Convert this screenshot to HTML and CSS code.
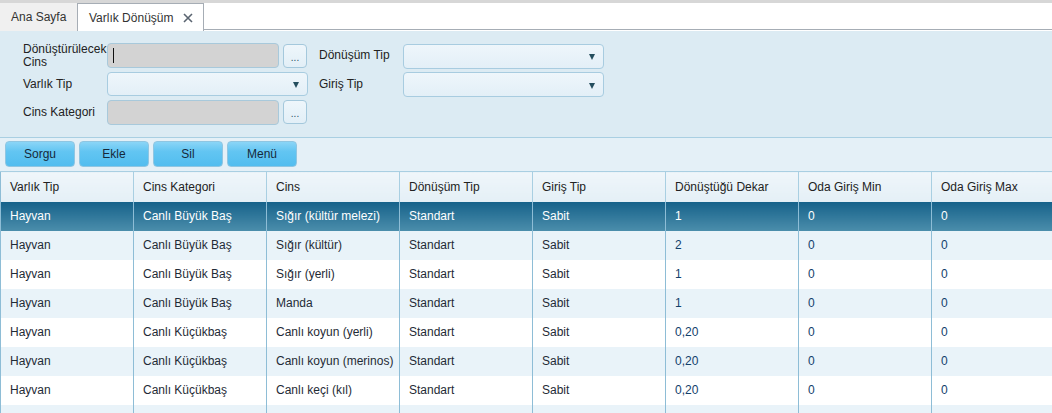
FILE: index.html
```html
<!DOCTYPE html>
<html lang="tr">
<head>
<meta charset="utf-8">
<title>Varlık Dönüşüm</title>
<link rel="stylesheet" href="styles.css">
</head>
<body>
<div class="topstrip"></div>
<div class="tabbar">
  <div class="tab">Ana Sayfa</div>
  <div class="tab active">Varlık Dönüşüm
    <svg class="close" width="10" height="10" viewBox="0 0 10 10"><path d="M1 1L9 9M9 1L1 9" stroke="#5a6470" stroke-width="1.6" fill="none"/></svg>
  </div>
  <div class="tabfill"></div>
</div>

<div class="form">
  <div class="lbl two">Dönüştürülecek Cins</div>
  <div class="inp gray"><span class="caret"></span></div>
  <div class="dots">...</div>
  <div class="lbl r">Dönüşüm Tip</div>
  <div class="sel r"><span class="arrow"></span></div>

  <div class="lbl">Varlık Tip</div>
  <div class="sel wide"><span class="arrow"></span></div>
  <div class="lbl r">Giriş Tip</div>
  <div class="sel r"><span class="arrow"></span></div>

  <div class="lbl">Cins Kategori</div>
  <div class="inp gray"></div>
  <div class="dots">...</div>
</div>

<div class="toolbar">
  <button class="btn">Sorgu</button>
  <button class="btn">Ekle</button>
  <button class="btn">Sil</button>
  <button class="btn">Menü</button>
</div>

<div class="grid">
<table>
  <thead>
    <tr><th>Varlık Tip</th><th>Cins Kategori</th><th>Cins</th><th>Dönüşüm Tip</th><th>Giriş Tip</th><th>Dönüştüğü Dekar</th><th>Oda Giriş Min</th><th>Oda Giriş Max</th></tr>
  </thead>
  <tbody>
    <tr class="selected"><td>Hayvan</td><td>Canlı Büyük Baş</td><td>Sığır (kültür melezi)</td><td>Standart</td><td>Sabit</td><td class="num">1</td><td class="num">0</td><td class="num">0</td></tr>
    <tr class="alt"><td>Hayvan</td><td>Canlı Büyük Baş</td><td>Sığır (kültür)</td><td>Standart</td><td>Sabit</td><td class="num">2</td><td class="num">0</td><td class="num">0</td></tr>
    <tr><td>Hayvan</td><td>Canlı Büyük Baş</td><td>Sığır (yerli)</td><td>Standart</td><td>Sabit</td><td class="num">1</td><td class="num">0</td><td class="num">0</td></tr>
    <tr class="alt"><td>Hayvan</td><td>Canlı Büyük Baş</td><td>Manda</td><td>Standart</td><td>Sabit</td><td class="num">1</td><td class="num">0</td><td class="num">0</td></tr>
    <tr><td>Hayvan</td><td>Canlı Küçükbaş</td><td>Canlı koyun (yerli)</td><td>Standart</td><td>Sabit</td><td class="num">0,20</td><td class="num">0</td><td class="num">0</td></tr>
    <tr class="alt"><td>Hayvan</td><td>Canlı Küçükbaş</td><td>Canlı koyun (merinos)</td><td>Standart</td><td>Sabit</td><td class="num">0,20</td><td class="num">0</td><td class="num">0</td></tr>
    <tr><td>Hayvan</td><td>Canlı Küçükbaş</td><td>Canlı keçi (kıl)</td><td>Standart</td><td>Sabit</td><td class="num">0,20</td><td class="num">0</td><td class="num">0</td></tr>
    <tr class="alt"><td>Hayvan</td><td>Canlı Küçükbaş</td><td>Canlı keçi (kültür)</td><td>Standart</td><td>Sabit</td><td class="num">0,20</td><td class="num">0</td><td class="num">0</td></tr>
  </tbody>
</table>
</div>
</body>
</html>
```

FILE: styles.css
```css
html, body {
  margin: 0;
  padding: 0;
  width: 1052px;
  height: 413px;
  overflow: hidden;
  background: #ffffff;
  font-family: "Liberation Sans", Arial, sans-serif;
  font-size: 12px;
  color: #222;
}

.topstrip {
  height: 3px;
  background: #d7d7d7;
}

.tabbar {
  display: flex;
  height: 28px;
}

.tab {
  display: flex;
  align-items: center;
  box-sizing: border-box;
  padding: 0 0 0 11px;
  background: #f0f0f0;
  color: #333;
  width: 77px;
  white-space: nowrap;
  flex: none;
}

.tab.active {
  background: #fff;
  padding: 0 0 0 11px;
  border-top: 1px solid #a6adb5;
  border-left: 1px solid #a6adb5;
  border-right: 1px solid #a6adb5;
  width: 127px;
  color: #333;
}

.close {
  margin-left: 10px;
}

.tabfill {
  flex: 1;
  background: #fff;
  border-bottom: 1px solid #a6adb5;
  margin-bottom: 1px;
}

.form {
  background: #dcebf3;
  border-bottom: 1px solid #a9cfe2;
  height: 94px;
  padding: 12px 0 0 23px;
  display: grid;
  grid-template-columns: 84px 172px 28px 12px 84px 201px;
  grid-template-rows: 25px 24px 24px;
  column-gap: 0;
  row-gap: 4px;
  align-items: center;
}

.lbl {
  color: #222;
  line-height: 13px;
  white-space: nowrap;
}

.lbl.two {
  width: 86px;
  white-space: normal;
  position: relative;
  z-index: 1;
}

.lbl.r {
  grid-column: 5;
}

.sel.r {
  grid-column: 6;
  height: 25px;
  margin-top: 1px;
}

.inp {
  height: 25px;
  box-sizing: border-box;
  border: 1px solid #a8c9db;
  border-radius: 4px;
  display: flex;
  align-items: center;
}

.inp.gray {
  background: #d3d3d3;
}

.caret {
  display: block;
  width: 1px;
  height: 15px;
  background: #111;
  margin-left: 5px;
}

.dots {
  grid-column: 3;
  margin-left: 4px;
  width: 24px;
  height: 24px;
  box-sizing: border-box;
  border: 1px solid #a4c8dc;
  border-radius: 4px;
  background: linear-gradient(#eef6fb, #e2eff7);
  color: #2d4f63;
  font-size: 10px;
  text-align: center;
  line-height: 26px;
}

.sel {
  height: 24px;
  box-sizing: border-box;
  border: 1px solid #a8cce0;
  border-radius: 4px;
  background: linear-gradient(#eef6fb, #e3eff7);
  display: flex;
  align-items: center;
  justify-content: flex-end;
  padding-right: 8px;
}

.sel.wide {
  grid-column: 2 / span 2;
  margin-right: -1px;
}

.arrow {
  width: 0;
  height: 0;
  border-left: 3.5px solid transparent;
  border-right: 3.5px solid transparent;
  border-top: 6px solid #244e5e;
  margin-top: 2px;
}

.toolbar {
  background: #e4f0f7;
  height: 33px;
  box-sizing: border-box;
  padding: 3px 0 0 5px;
  display: flex;
  gap: 4px;
  align-items: flex-start;
}

.btn {
  width: 70px;
  height: 26px;
  border: 1px solid #8fc6e2;
  border-radius: 4px;
  background: linear-gradient(#8bd5f7 0%, #62c5f2 40%, #52bdef 100%);
  font-family: "Liberation Sans", Arial, sans-serif;
  font-size: 12px;
  color: #16293a;
  padding: 0;
}

.grid {
  width: 1052px;
  overflow: hidden;
}

table {
  border-collapse: collapse;
  table-layout: fixed;
  width: 1065px;
  border-left: 1px solid #8ebdd6;
}

th, td {
  width: 133px;
  box-sizing: border-box;
  text-align: left;
  font-weight: normal;
  padding: 0 0 0 9px;
  white-space: nowrap;
  overflow: hidden;
  border-right: 1px solid #8ebdd6;
}

th {
  height: 30px;
  background: linear-gradient(#eff6fa, #e4eff6);
  border-top: 1px solid #a9cfe2;
  border-right-color: #a9cfe2;
  color: #222;
}

td {
  height: 29px;
  color: #1f2b36;
}

td.num {
  color: #12406b;
}

tr.alt td {
  background: #e9f3f9;
}

tr.selected td {
  background: linear-gradient(#16628a, #4b8dab);
  color: #fff;
}
```
